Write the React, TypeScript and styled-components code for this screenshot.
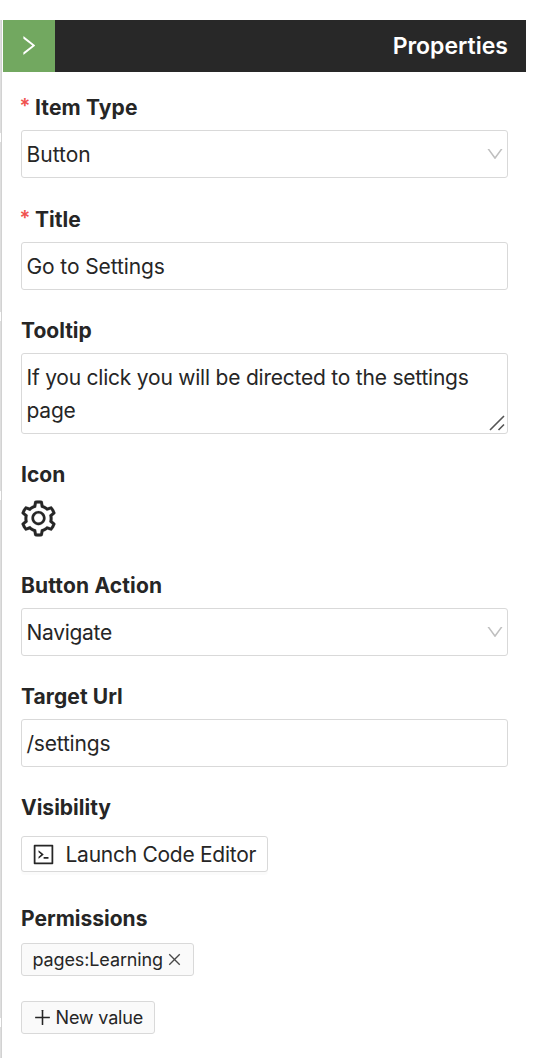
import React from 'react';
import styled, { createGlobalStyle } from 'styled-components';
import {
  AiOutlineClose,
  AiOutlineCode,
  AiOutlineDown,
  AiOutlinePlus,
  AiOutlineRight,
  AiOutlineSetting,
} from 'react-icons/ai';

const GlobalStyle = createGlobalStyle`
  *, *::before, *::after { box-sizing: border-box; }
  body {
    margin: 0;
    background: #fff;
    color: #262626;
    font-family: Inter, "Liberation Sans", sans-serif;
    font-size: 21px;
  }
  svg { flex-shrink: 0; }
`;

const Page = styled.div`
  display: flex;
  height: 1058px;
  padding-top: 20px;
  overflow: hidden;
`;

const Splitter = styled.div`
  display: flex;
  flex-direction: column;
  width: 2px;
  margin-right: 1px;
  background: linear-gradient(90deg, #dedede 50%, #d2d2d2 50%);
`;

const Notch = styled.span<{ $gap: number }>`
  width: 1px;
  height: 9px;
  margin-top: ${(p) => p.$gap}px;
  background: #fff;
`;

const Panel = styled.aside`
  width: 523px;
`;

const Header = styled.header`
  display: flex;
  align-items: center;
  height: 52px;
  padding-right: 18px;
  background: #282828;
  color: #fff;
`;

const CollapseButton = styled.button`
  display: flex;
  align-items: center;
  justify-content: center;
  width: 52px;
  height: 52px;
  margin-right: auto;
  padding: 0 1px 1px 0;
  border: 0;
  background: #72a860;
  color: #fff;
  font-size: 25px;
`;

const Spaced = styled.span<{ $spacing?: number }>`
  letter-spacing: ${(p) => p.$spacing ?? 0}px;
  white-space: nowrap;
`;

const Heading = styled.h1`
  margin: 0;
  font-size: 23px;
  font-weight: 600;
  line-height: 52px;
`;

const Form = styled.div`
  padding: 18px 18px 0;
`;

const Item = styled.section<{ $gap?: number }>`
  margin-bottom: ${(p) => p.$gap ?? 23}px;
`;

const Label = styled.label`
  display: flex;
  height: 40px;
  font-weight: 700;
  line-height: 36px;
`;

const Required = styled.span`
  width: 14px;
  color: #f0524f;
  font-size: 20px;
  font-weight: 600;
  line-height: 32px;
  letter-spacing: -1px;
  text-indent: -1.5px;
`;

const Field = styled.div`
  display: flex;
  align-items: center;
  justify-content: space-between;
  height: 48px;
  padding: 0 2px 0 4.5px;
  border: 1px solid #d9d9d9;
  border-radius: 3px;
`;

const Arrow = styled(AiOutlineDown)`
  color: #bfbfbf;
  font-size: 20px;
`;

const TextArea = styled.div`
  position: relative;
  height: 81px;
  padding: 7px 4.5px;
  border: 1px solid #d9d9d9;
  border-radius: 3px;
  line-height: 33px;
`;

const Grip = styled.svg`
  position: absolute;
  right: 2px;
  bottom: 2px;
`;

const IconSlot = styled.div`
  height: 48px;
  padding-top: 1px;
  font-size: 41px;
  svg {
    display: block;
    margin-left: -3px;
    stroke-width: 4px;
  }
`;

const LaunchButton = styled.button`
  display: flex;
  align-items: center;
  gap: 10px;
  width: 247px;
  height: 36px;
  margin-top: 6px;
  padding: 0 0 0 8.5px;
  border: 1px solid #d9d9d9;
  border-radius: 3px;
  background: #fff;
  box-shadow: 0 3px 0 rgba(0, 0, 0, 0.016);
  color: inherit;
  font: inherit;
`;

const Tag = styled.div<{ $width: number; $top: number; $inset: number }>`
  display: flex;
  align-items: center;
  width: ${(p) => p.$width}px;
  height: 33px;
  margin-top: ${(p) => p.$top}px;
  padding: 0 0 1px ${(p) => p.$inset}px;
  border: 1px solid #d9d9d9;
  border-radius: 3px;
  background: #fafafa;
  font-size: 18px;
  gap: 3px;
`;

const RemoveIcon = styled(AiOutlineClose)`
  color: #484848;
  font-size: 17px;
`;

export default function App() {
  return (
    <Page>
      <GlobalStyle />
      <Splitter>
        <Notch $gap={113} />
        <Notch $gap={170} />
        <Notch $gap={170} />
        <Notch $gap={518} />
      </Splitter>
      <Panel>
        <Header>
          <CollapseButton aria-label="Collapse"><AiOutlineRight /></CollapseButton>
          <Heading><Spaced>Properties</Spaced></Heading>
        </Header>
        <Form>
          <Item $gap={24}>
            <Label><Required>*</Required><Spaced $spacing={0.12}>Item Type</Spaced></Label>
            <Field><Spaced>Button</Spaced><Arrow /></Field>
          </Item>
          <Item>
            <Label><Required>*</Required><Spaced>Title</Spaced></Label>
            <Field><Spaced $spacing={-0.1}>Go to Settings</Spaced></Field>
          </Item>
          <Item>
            <Label><Spaced>Tooltip</Spaced></Label>
            <TextArea>
              <Spaced $spacing={-0.22}>If you click you will be directed to the settings<br />page</Spaced>
              <Grip width="16" height="16" viewBox="0 0 16 16" fill="none" stroke="#555" strokeWidth="1.6">
                <path d="M1 15L15 1M9.5 15L15 9.5" />
              </Grip>
            </TextArea>
          </Item>
          <Item>
            <Label><Spaced>Icon</Spaced></Label>
            <IconSlot><AiOutlineSetting /></IconSlot>
          </Item>
          <Item>
            <Label><Spaced $spacing={0.15}>Button Action</Spaced></Label>
            <Field><Spaced $spacing={-0.3}>Navigate</Spaced><Arrow /></Field>
          </Item>
          <Item>
            <Label><Spaced $spacing={0.08}>Target Url</Spaced></Label>
            <Field><Spaced $spacing={-0.2}>/settings</Spaced></Field>
          </Item>
          <Item $gap={29}>
            <Label><Spaced>Visibility</Spaced></Label>
            <LaunchButton><AiOutlineCode size={25} /><Spaced $spacing={-0.27}>Launch Code Editor</Spaced></LaunchButton>
          </Item>
          <Item>
            <Label><Spaced>Permissions</Spaced></Label>
            <Tag $width={173} $top={2} $inset={10.5}><Spaced $spacing={-0.12}>pages:Learning</Spaced><RemoveIcon /></Tag>
            <Tag $width={134} $top={25} $inset={9.5}><AiOutlinePlus size={21} /><Spaced $spacing={-0.18}>New value</Spaced></Tag>
          </Item>
        </Form>
      </Panel>
    </Page>
  );
}
